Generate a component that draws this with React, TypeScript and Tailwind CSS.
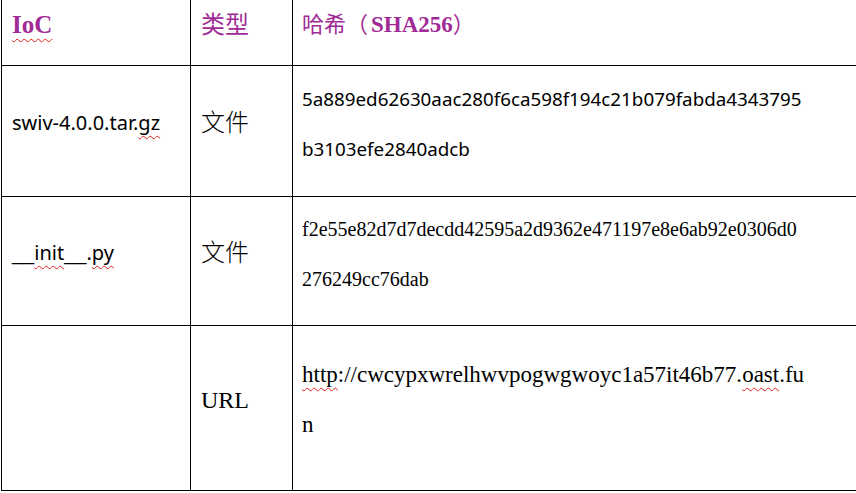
import React from 'react';

const serif = "font-['Liberation_Serif','Times_New_Roman','Noto_Sans_CJK_SC',serif]";
const sans = "font-['Noto_Sans','Noto_Sans_CJK_SC',sans-serif]";
const squiggle = 'underline decoration-wavy decoration-[#e0201c] decoration-1 underline-offset-[5px]';

const Cell: React.FC<{ className?: string; children?: React.ReactNode }> = ({ className = '', children }) => (
  <div className={`flex items-center border-l border-b border-black leading-[50px] ${className}`}>
    <div>{children}</div>
  </div>
);

const Underscores = () => (
  <span className="font-['Liberation_Sans',Arial,sans-serif]">__</span>
);

const App: React.FC = () => {
  return (
    <div className="w-[856px] h-[493px] bg-white overflow-hidden">
      <div className="ml-px w-[855px] grid grid-cols-[189px_102px_1fr] grid-rows-[66px_131px_129px_165px]">
        {/* header */}
        <Cell className={`pl-[10px] pb-[16px] ${serif} text-[25px] font-bold text-[#a12b96]`}>
          <span className={squiggle}>IoC</span>
        </Cell>
        <Cell className={`pl-[10px] pb-[16px] ${serif} text-[24px] font-normal text-[#a12b96]`}>类型</Cell>
        <Cell className={`pl-[9px] pb-[16px] ${serif} text-[22px] font-normal text-[#a12b96]`}>
          哈希<span className="pr-[3px]">（</span>
          <span className="text-[23px] font-bold">SHA256</span>）
        </Cell>

        {/* row 1 */}
        <Cell className={`pl-[10px] pb-[16px] ${sans} text-[20px] text-black`}>
          swiv-4.0.0.tar.<span className={squiggle}>gz</span>
        </Cell>
        <Cell className={`pl-[10px] pb-[16px] ${serif} text-[24px] font-light text-black`}>文件</Cell>
        <Cell className={`pl-[9px] pb-[15px] ${sans} text-[18.8px] text-black`}>
          <div>5a889ed62630aac280f6ca598f194c21b079fabda4343795</div>
          <div>b3103efe2840adcb</div>
        </Cell>

        {/* row 2 */}
        <Cell className={`pl-[10px] pb-[16px] ${sans} text-[20px] text-black`}>
          <Underscores />
          <span className={squiggle}>init</span>
          <Underscores />.<span className={squiggle}>py</span>
        </Cell>
        <Cell className={`pl-[10px] pb-[16px] ${serif} text-[24px] font-light text-black`}>文件</Cell>
        <Cell className={`pl-[9px] pb-[14px] ${serif} text-[20px] text-black`}>
          <div>f2e55e82d7d7decdd42595a2d9362e471197e8e6ab92e0306d0</div>
          <div>276249cc76dab</div>
        </Cell>

        {/* row 3 */}
        <Cell className="pl-[10px]" />
        <Cell className={`pl-[10px] pb-[16px] ${serif} text-[24px] text-black`}>URL</Cell>
        <Cell className={`pl-[9px] pb-[16px] ${serif} text-[23px] text-black`}>
          <div>
            <span className={squiggle}>http</span>://cwcypxwrelhwvpogwgwoyc1a57it46b77.<span className={squiggle}>oast</span>.fu
          </div>
          <div>n</div>
        </Cell>
      </div>
    </div>
  );
};

export default App;
